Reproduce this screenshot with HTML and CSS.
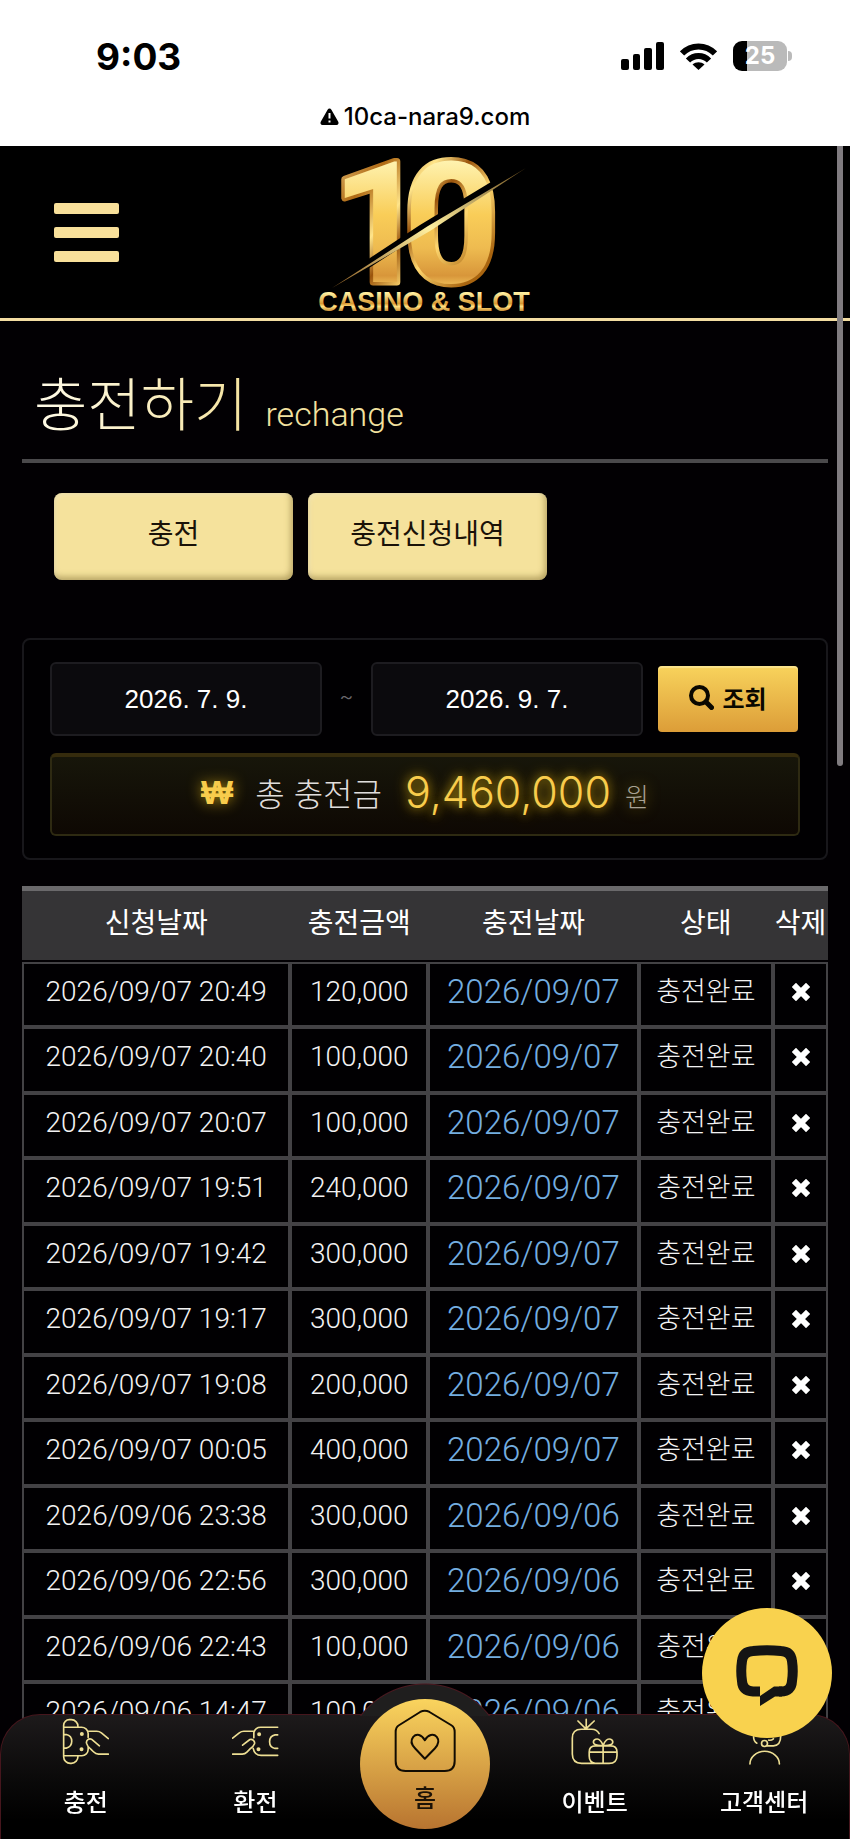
FILE: index.html
```html
<!DOCTYPE html>
<html lang="ko">
<head>
<meta charset="utf-8">
<meta name="viewport" content="width=device-width, initial-scale=1">
<title>10 CASINO &amp; SLOT</title>
<link rel="stylesheet" href="styles.css">
</head>
<body>
<svg class="defs" width="0" height="0" aria-hidden="true">
  <symbol id="x" viewBox="0 0 18 18"><path d="M4 4L14 14M14 4L4 14" fill="none" stroke="#fff" stroke-width="6" stroke-linecap="square" stroke-linejoin="round"/></symbol>
</svg>

<div class="status">
  <div class="status-row">
    <span class="clock">9:03</span>
    <div class="indicators">
      <svg width="43" height="28" viewBox="0 0 43 28" aria-label="signal"><rect x="0" y="17" width="8" height="11" rx="2"/><rect x="12" y="12" width="7" height="16" rx="2"/><rect x="23" y="6" width="8" height="22" rx="2"/><rect x="35" y="0" width="8" height="28" rx="2"/></svg>
      <svg width="37" height="27" viewBox="0 0 37 27" aria-label="wifi"><g fill="none" stroke="#000" stroke-width="6"><path d="M2 10.500C11 1 26 1 35 10.500"/><path d="M8 17.500C14 11.500 23 11.500 29 17.500"/></g><path d="M12.500 21.500C16 18.500 21 18.500 24.500 21.500L18.500 27Z"/></svg>
      <div class="battery"><span>25</span></div>
    </div>
  </div>
  <div class="url">
    <svg width="19" height="17" viewBox="0 0 19 17" aria-hidden="true"><path d="M9.500 0.500Q10.700 0.500 11.400 1.800L18.400 14Q19 16.700 16.600 17H2.400Q0 16.700 0.600 14L7.600 1.800Q8.300 0.500 9.500 0.500Z"/><path d="M9.500 5v5.500M9.500 12.500v2" stroke="#fff" stroke-width="2"/></svg>
    <span>10ca-nara9.com</span>
  </div>
</div>

<header class="top">
  <button class="menu" aria-label="메뉴"><i></i><i></i><i></i></button>
  <a class="logo" href="#" aria-label="10 CASINO &amp; SLOT">
    <svg width="240" height="172" viewBox="305 146 240 172">
      <defs>
        <linearGradient id="face" x1="0" y1="0" x2="0" y2="1"><stop offset="0.150" stop-color="#fff6b8"/><stop offset="0.450" stop-color="#f9cd58"/><stop offset="0.620" stop-color="#eebb50"/><stop offset="0.760" stop-color="#d8963a"/><stop offset="0.840" stop-color="#fbd468"/></linearGradient>
        <linearGradient id="rim" x1="0" y1="0" x2="1" y2="1"><stop offset="0" stop-color="#fff0b0"/><stop offset="0.250" stop-color="#b06a14"/><stop offset="0.400" stop-color="#ffe58a"/><stop offset="0.500" stop-color="#9a540c"/><stop offset="0.620" stop-color="#ffd870"/><stop offset="0.800" stop-color="#a8640f"/></linearGradient>
        <linearGradient id="word" x1="0" y1="0" x2="0" y2="1"><stop offset="0.200" stop-color="#fff0a0"/><stop offset="0.550" stop-color="#d99a34"/><stop offset="0.650" stop-color="#ffdf80"/><stop offset="0.850" stop-color="#b8741c"/></linearGradient>
        <linearGradient id="blade" x1="0" y1="1" x2="1" y2="0"><stop offset="0" stop-color="#8a5a20"/><stop offset="0.500" stop-color="#fff0a0"/><stop offset="1" stop-color="#70501c"/></linearGradient>
      </defs>
      <text class="digits" x="331 403" y="282" fill="url(#face)" stroke="url(#rim)" stroke-width="7" stroke-linejoin="round">10</text>
      <path d="M326 287L420 225L534 156L534 162L420 235L326 296Z" fill="#000"/>
      <path d="M332 288L428 226L526 168L430 231Z" fill="url(#blade)"/>
      <text class="word" x="424" y="311" text-anchor="middle" fill="url(#word)">CASINO &amp; SLOT</text>
    </svg>
  </a>
</header>

<main>
  <h1 class="title"><span>충전하기</span> <small>rechange</small></h1>
  <div class="tabs">
    <button>충전</button>
    <button>충전신청내역</button>
  </div>

  <section class="filter">
    <form class="dates">
      <input type="text" value="2026. 7. 9." aria-label="시작일">
      <span>~</span>
      <input type="text" value="2026. 9. 7." aria-label="종료일">
      <button type="button"><svg width="25" height="25" viewBox="0 0 25 25" aria-hidden="true"><circle cx="10.500" cy="10.500" r="8.500" fill="none" stroke="#0a0800" stroke-width="4"/><path d="M17 17L22.500 22.500" stroke="#0a0800" stroke-width="5" stroke-linecap="round"/></svg>조회</button>
    </form>
    <div class="total">
      <span class="won">₩</span>
      <span class="label">총 충전금</span>
      <strong>9,460,000</strong>
      <span class="unit">원</span>
    </div>
  </section>

  <table class="history">
    <colgroup><col class="c1"><col class="c2"><col class="c3"><col class="c4"><col class="c5"></colgroup>
    <thead><tr><th>신청날짜</th><th>충전금액</th><th>충전날짜</th><th>상태</th><th>삭제</th></tr></thead>
    <tbody>
      <tr><td>2026/09/07 20:49</td><td>120,000</td><td class="day">2026/09/07</td><td class="state">충전완료</td><td><button aria-label="삭제"><svg><use href="#x"/></svg></button></td></tr>
      <tr><td>2026/09/07 20:40</td><td>100,000</td><td class="day">2026/09/07</td><td class="state">충전완료</td><td><button aria-label="삭제"><svg><use href="#x"/></svg></button></td></tr>
      <tr><td>2026/09/07 20:07</td><td>100,000</td><td class="day">2026/09/07</td><td class="state">충전완료</td><td><button aria-label="삭제"><svg><use href="#x"/></svg></button></td></tr>
      <tr><td>2026/09/07 19:51</td><td>240,000</td><td class="day">2026/09/07</td><td class="state">충전완료</td><td><button aria-label="삭제"><svg><use href="#x"/></svg></button></td></tr>
      <tr><td>2026/09/07 19:42</td><td>300,000</td><td class="day">2026/09/07</td><td class="state">충전완료</td><td><button aria-label="삭제"><svg><use href="#x"/></svg></button></td></tr>
      <tr><td>2026/09/07 19:17</td><td>300,000</td><td class="day">2026/09/07</td><td class="state">충전완료</td><td><button aria-label="삭제"><svg><use href="#x"/></svg></button></td></tr>
      <tr><td>2026/09/07 19:08</td><td>200,000</td><td class="day">2026/09/07</td><td class="state">충전완료</td><td><button aria-label="삭제"><svg><use href="#x"/></svg></button></td></tr>
      <tr><td>2026/09/07 00:05</td><td>400,000</td><td class="day">2026/09/07</td><td class="state">충전완료</td><td><button aria-label="삭제"><svg><use href="#x"/></svg></button></td></tr>
      <tr><td>2026/09/06 23:38</td><td>300,000</td><td class="day">2026/09/06</td><td class="state">충전완료</td><td><button aria-label="삭제"><svg><use href="#x"/></svg></button></td></tr>
      <tr><td>2026/09/06 22:56</td><td>300,000</td><td class="day">2026/09/06</td><td class="state">충전완료</td><td><button aria-label="삭제"><svg><use href="#x"/></svg></button></td></tr>
      <tr><td>2026/09/06 22:43</td><td>100,000</td><td class="day">2026/09/06</td><td class="state">충전완료</td><td><button aria-label="삭제"><svg><use href="#x"/></svg></button></td></tr>
      <tr><td>2026/09/06 14:47</td><td>100,000</td><td class="day">2026/09/06</td><td class="state">충전완료</td><td><button aria-label="삭제"><svg><use href="#x"/></svg></button></td></tr>
    </tbody>
  </table>
</main>

<div class="scrollbar" aria-hidden="true"></div>

<nav class="bottom">
  <a href="#"><svg viewBox="183 383 142 142"><path d="M188 500V405a17 17 0 0 1 17-17h6a20 20 0 0 1 20 22M188 411H242a20 20 0 0 1 20 18V442M262 470V478a19 19 0 0 1-19 19H188M188 500a20 20 0 0 0 20 20h3a20 20 0 0 0 20-22M190 433h6a21 21 0 0 1 0 41h-6M262 423h26q8 0 14 5l21 17M296 467L272 447A11 11 0 0 0 257 459q3 12 13 18l8 8q7 7 15 7H323"/><path class="dot" d="M243 431v0.100M242 477v0.100"/></svg>충전</a>
  <a href="#"><svg viewBox="694 383 142 142"><path d="M832 411H782a22 22 0 0 0-22 16v16M758 475q4 21 24 21H832M832 434h-8a21 21 0 0 0 0 41h8M696 444l20-16q6-5 14-5h30M726 465l22-17a11 11 0 0 1 14 13q-3 8-12 14l-11 11q-6 6-14 6H696"/><path class="dot" d="M776 432v0.100M774 477v0.100"/></svg>환전</a>
  <a class="home" href="#"><span><svg viewBox="1180 353 187 190"><path d="M1195 402q-10 6-10 20v88q0 30 30 30h118q30 0 30-30v-88q0-14-10-20l-66-40q-14-8-28 0z"/><path d="M1273 503l-29-31c-12-12-14-25-6-35 10-11 25-7 35 10 10-17 26-21 36-10 8 10 5 23-6 35z"/></svg>홈</span></a>
  <a href="#"><svg viewBox="438 383 142 142"><path d="M523 430q-7-13-22-13H469q-27 0-27 27v48q0 28 28 28H553q24 0 24-24V486q0-19-19-19H512q-19 0-19 19v12q0 20 18 22M484 387v29M459 392l24 24 25-24M493 486H577M535 466v54M535 466c-6 0-26 2-29-8-2-10 12-16 20-7 6 6 7 10 9 15zM535 466c6 0 26 2 29-8 2-10-12-16-20-7-6 6-7 10-9 15z"/></svg>이벤트</a>
  <a href="#"><svg viewBox="948 383 142 142"><path d="M975 522a44 38 0 0 1 89 0M986 440q0 14 10 19M1010 460a9 9 0 1 0 18 0a9 9 0 1 0-18 0M1028 467h18q22 0 22-30M1046 446q-6 5-14 4M980 430v-6a39 34 0 0 1 78 0v6"/></svg>고객센터</a>
</nav>

<button class="chat" aria-label="채팅 상담">
  <svg width="62" height="62" viewBox="0 0 62 62"><path fill="none" stroke="#141414" stroke-width="10" d="M24 46.500H17Q6.500 46 6 36Q4.500 26 6 16Q7 6.500 17 6Q31 4.500 45 6Q55 6.500 56 16Q57.500 26 56 36Q55.500 46.500 45 46.500H43"/><path fill="#141414" d="M24 61V51L38 41.500H46V51.500H39Z"/></svg>
</button>
</body>
</html>
```

FILE: styles.css
```css
* { box-sizing: border-box; }
body {
  margin: 0;
  background: #020003;
  color: #f2f2f2;
  font-family: Inter, "Noto Sans CJK KR", sans-serif;
  font-weight: 300;
  min-height: 100vh;
}
button, input { font: inherit; color: inherit; margin: 0; padding: 0; border: 0; }
a { color: inherit; text-decoration: none; }
.defs { position: absolute; }

.status { background: #fff; color: #000; height: 146px; padding: 34px 0; }
.status-row { display: flex; justify-content: space-between; align-items: center; height: 44px; padding: 0 63px 0 96px; }
.clock { font-size: 37px; font-weight: 700; }
.indicators { display: flex; align-items: center; gap: 16px; }
.battery {
  position: relative;
  width: 54px;
  height: 30px;
  border-radius: 9px;
  background: linear-gradient(90deg, #000 14px, #bababa 14px);
  color: #fff;
  font-size: 24px;
  font-weight: 700;
  line-height: 30px;
  text-align: center;
}
.battery::after {
  content: "";
  position: absolute;
  left: 55px;
  top: 10px;
  width: 4px;
  height: 10px;
  border-radius: 0 5px 5px 0;
  background: #bababa;
}
.url { display: flex; justify-content: center; align-items: center; gap: 5px; margin-top: 21px; height: 34px; font-size: 24px; font-weight: 500; }

.top {
  display: grid;
  grid-template-columns: 1fr 240px 1fr;
  align-items: center;
  height: 175px;
  background: #000;
  border-bottom: 3px solid #f3dda2;
}
.menu { display: flex; flex-direction: column; gap: 13px; width: 65px; margin-left: 54px; background: none; }
.menu i { height: 11px; border-radius: 2px; background: #f8e09a; }
.logo, .logo svg { display: block; overflow: visible; }
.digits { font-family: Roboto, sans-serif; font-weight: 700; font-size: 168px; paint-order: stroke; }
.word { font-family: "Liberation Sans", sans-serif; font-weight: 700; font-size: 27px; }

main { padding: 0 22px; }
.title {
  display: flex;
  align-items: baseline;
  gap: 18px;
  margin: 0;
  height: 142px;
  padding: 42px 12px 0;
  border-bottom: 4px solid #4a494b;
  font-size: 58px;
  font-weight: 300;
  line-height: 84px;
}
.title span { background: linear-gradient(90deg, #fffbe8, #f5e3a0); -webkit-background-clip: text; background-clip: text; color: transparent; }
.title small { font-family: Roboto, sans-serif; font-size: 34px; color: #f3e2a0; }
.tabs { display: flex; gap: 15px; padding: 30px 32px 0; }
.tabs button {
  width: 239px;
  height: 87px;
  padding-bottom: 10px;
  border-radius: 8px;
  background: #f5e29c;
  box-shadow: inset -2px -3px 6px rgba(120, 100, 40, 0.5), inset 2px 2px 4px rgba(255, 250, 230, 0.4);
  color: #1a1208;
  font-size: 28px;
  font-weight: 400;
}

.filter { margin-top: 58px; padding: 22px 26px; border: 2px solid #18171b; border-radius: 8px; background: #010002; }
.dates { display: flex; align-items: center; }
.dates input {
  flex: 1;
  min-width: 0;
  height: 74px;
  border: 2px solid #1d1c20;
  border-radius: 6px;
  background: #0b0a0d;
  color: #fff;
  font-family: "Liberation Sans", sans-serif;
  font-size: 26px;
  font-weight: 400;
  text-align: center;
}
.dates span { width: 49px; padding-bottom: 6px; text-align: center; color: #6c6a6e; font-size: 22px; }
.dates button {
  display: flex;
  align-items: center;
  justify-content: center;
  gap: 8px;
  width: 140px;
  height: 66px;
  margin: 0 2px 0 15px;
  padding-bottom: 3px;
  border-radius: 4px;
  background: linear-gradient(#f8d35c, #dc9d38);
  box-shadow: inset 0 2px 1px rgba(255, 245, 190, 0.5);
  color: #0a0800;
  font-size: 24px;
  font-weight: 700;
}
.total {
  display: flex;
  align-items: center;
  justify-content: center;
  height: 83px;
  margin-top: 17px;
  padding: 0 0 7px;
  border: 2px solid #2e2a12;
  border-top: 4px solid #352b0d;
  border-radius: 6px;
  background: linear-gradient(#17160a, #0e0803);
  white-space: nowrap;
}
.won { font-family: "Liberation Sans", sans-serif; font-size: 34px; font-weight: 700; color: #f8cc4c; text-shadow: 0 0 14px #a08010; }
.label { margin-left: 22px; font-size: 32px; color: #e0dedc; }
.total strong { margin-left: 23px; font-size: 43px; font-weight: 300; color: #f8cc4c; text-shadow: 0 0 14px #b89410, 0 0 8px #705a08; }
.unit { margin-left: 14px; padding-top: 6px; font-size: 26px; color: #a8a294; text-shadow: 0 0 14px #806808; }

.history { width: 100%; margin-top: 26px; border-collapse: separate; border-spacing: 0; table-layout: fixed; text-align: center; white-space: nowrap; }
.c1 { width: 33.3%; }
.c2 { width: 17.1%; }
.c3 { width: 26.1%; }
.c4 { width: 16.7%; }
.c5 { width: 6.8%; }
th { height: 76px; padding: 0 0 10px; border-top: 5px solid #6a696b; border-bottom: 2px solid #020003; background: #353436; background-clip: padding-box; color: #fff; font-size: 28px; font-weight: 400; }
td { height: 65px; padding: 0 0 6px; border: 2px solid #434245; background: #010002; font-family: Roboto, "Noto Sans CJK KR", sans-serif; font-size: 28px; line-height: 40px; }
tr:nth-child(even) td { height: 66px; }
.day { color: #74aee0; font-size: 33px; }
.state { font-size: 27px; }
td button { display: block; margin: 0 auto; background: none; }
td svg { display: block; width: 18px; height: 18px; }

.scrollbar { position: absolute; top: 146px; right: 7px; width: 6px; height: 620px; border-radius: 0 0 3px 3px; background: #807c80; }

.bottom {
  position: fixed;
  inset: auto 0 0 0;
  display: grid;
  grid-template-columns: repeat(5, 1fr);
  height: 125px;
  border: 1px solid #46161d;
  border-bottom: 0;
  border-radius: 40px 40px 0 0;
  background: linear-gradient(#1d1a1b, #0b0a0a 50%, #000 85%);
  color: #fff;
  font-size: 24px;
  font-weight: 500;
}
.bottom::before {
  content: "";
  position: absolute;
  left: 50%;
  top: -32px;
  width: 164px;
  height: 33px;
  margin-left: -82px;
  background: radial-gradient(circle 82px at 50% 82px, #1f1e1e 80px, #4c1820 81px, transparent 82px);
}
.bottom a { position: relative; display: flex; flex-direction: column; align-items: center; padding-top: 3px; line-height: 36px; }
.bottom svg { width: 47px; height: 47px; margin-bottom: 20px; fill: none; stroke: #eedf94; stroke-width: 5; stroke-linecap: round; stroke-linejoin: round; }
.bottom .dot { stroke-width: 12; }
.home span {
  position: absolute;
  top: -16px;
  left: 50%;
  width: 130px;
  height: 130px;
  margin-left: -65px;
  padding-top: 10px;
  border-radius: 50%;
  background: linear-gradient(#fad45e, #b87430);
  color: #1c1206;
  text-align: center;
}
.bottom .home svg { display: block; width: 62px; height: 63px; margin: 0 auto 9px; stroke: #120c02; stroke-width: 6; }

.chat {
  position: fixed;
  right: 18px;
  bottom: 101px;
  display: flex;
  align-items: center;
  justify-content: center;
  width: 130px;
  height: 130px;
  padding-top: 5px;
  border-radius: 50%;
  background: #f9d24e;
}
```
